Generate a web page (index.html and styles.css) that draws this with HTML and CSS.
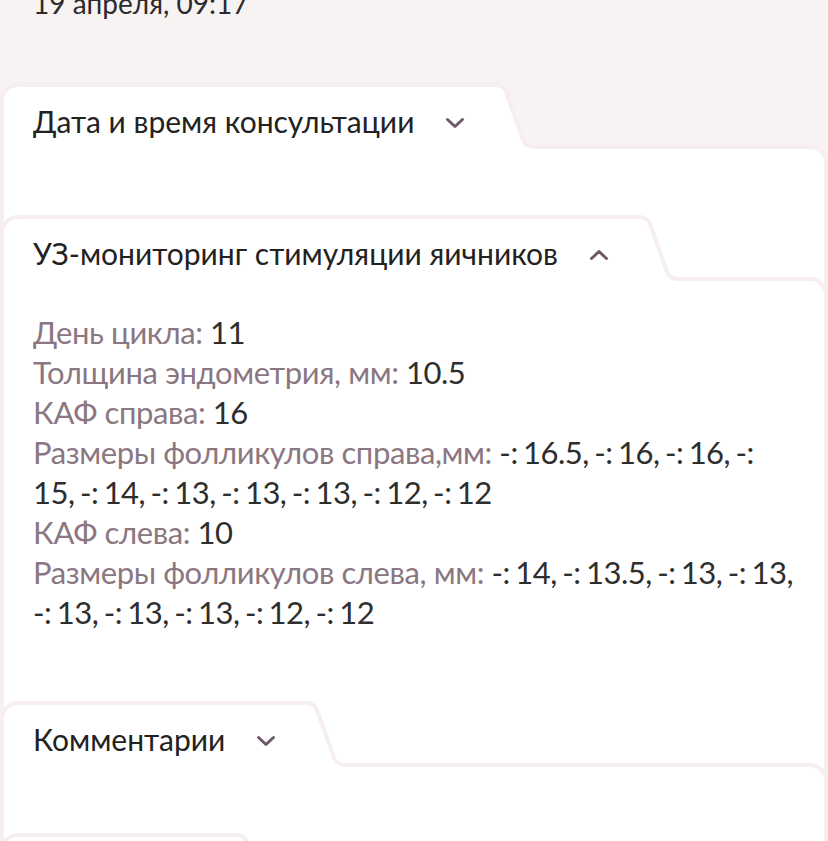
FILE: index.html
```html
<!DOCTYPE html>
<html lang="ru">
<head>
  <meta charset="UTF-8">
  <meta name="viewport" content="width=device-width, initial-scale=1.0">
  <title>Приём</title>
  <link rel="stylesheet" href="styles.css">
</head>
<body>
  <main class="visit">
    <p class="visit-date">19 апреля, 09:17</p>

    <section class="panel">
      <header class="panel-head">
        <div class="panel-tab">
          <h2 class="panel-title">Дата и время консультации</h2>
          <svg class="chevron" viewBox="0 0 20 12"><polyline points="2.5,2.5 10,9.5 17.5,2.5"/></svg>
        </div>
        <svg class="panel-slope" viewBox="0 0 48 66"><path class="slope-fill" d="M0 2 H3 C9 2 12 4 14 9 L31 57 C33 62 37 64 43 64 H48 V66 H0 Z"/><path class="slope-line" d="M0 2 H3 C9 2 12 4 14 9 L31 57 C33 62 37 64 43 64 H48"/></svg>
      </header>
      <div class="panel-body panel-body--empty"></div>
    </section>

    <section class="panel panel--stacked">
      <header class="panel-head">
        <div class="panel-tab">
          <h2 class="panel-title">УЗ-мониторинг стимуляции яичников</h2>
          <svg class="chevron" viewBox="0 0 20 12"><polyline points="2.5,9.5 10,2.5 17.5,9.5"/></svg>
        </div>
        <svg class="panel-slope" viewBox="0 0 48 66"><path class="slope-fill" d="M0 2 H3 C9 2 12 4 14 9 L31 57 C33 62 37 64 43 64 H48 V66 H0 Z"/><path class="slope-line" d="M0 2 H3 C9 2 12 4 14 9 L31 57 C33 62 37 64 43 64 H48"/></svg>
      </header>
      <div class="panel-body">
        <ul class="facts">
          <li><span class="fact-label">День цикла: </span>11</li>
          <li><span class="fact-label">Толщина эндометрия, мм: </span>10.5</li>
          <li><span class="fact-label">КАФ справа: </span>16</li>
          <li><span class="fact-label">Размеры фолликулов справа,мм: </span>-: 16.5, -: 16, -: 16, -: 15, -: 14, -: 13, -: 13, -: 13, -: 12, -: 12</li>
          <li><span class="fact-label">КАФ слева: </span>10</li>
          <li><span class="fact-label">Размеры фолликулов слева, мм: </span>-: 14, -: 13.5, -: 13, -: 13, -: 13, -: 13, -: 13, -: 12, -: 12</li>
        </ul>
      </div>
    </section>

    <section class="panel panel--stacked">
      <header class="panel-head">
        <div class="panel-tab">
          <h2 class="panel-title">Комментарии</h2>
          <svg class="chevron" viewBox="0 0 20 12"><polyline points="2.5,2.5 10,9.5 17.5,2.5"/></svg>
        </div>
        <svg class="panel-slope" viewBox="0 0 48 66"><path class="slope-fill" d="M0 2 H3 C9 2 12 4 14 9 L31 57 C33 62 37 64 43 64 H48 V66 H0 Z"/><path class="slope-line" d="M0 2 H3 C9 2 12 4 14 9 L31 57 C33 62 37 64 43 64 H48"/></svg>
      </header>
      <div class="panel-body panel-body--empty"></div>
    </section>

    <section class="panel panel--stacked">
      <header class="panel-head">
        <div class="panel-tab">
          <h2 class="panel-title">Анализы</h2>
          <svg class="chevron" viewBox="0 0 20 12"><polyline points="2.5,2.5 10,9.5 17.5,2.5"/></svg>
        </div>
        <svg class="panel-slope" viewBox="0 0 48 66"><path class="slope-fill" d="M0 2 H3 C9 2 12 4 14 9 L31 57 C33 62 37 64 43 64 H48 V66 H0 Z"/><path class="slope-line" d="M0 2 H3 C9 2 12 4 14 9 L31 57 C33 62 37 64 43 64 H48"/></svg>
      </header>
      <div class="panel-body panel-body--empty"></div>
    </section>
  </main>
</body>
</html>
```

FILE: styles.css
```css
body {
  margin: 0;
  padding: 0;
  font-family: Lato, "Noto Sans", sans-serif;
  background-color: #f8f3f3;
  color: #2b2b2b;
  overflow: hidden;
}

.visit-date {
  margin: -17px 0 0;
  padding-left: 33px;
  font-size: 28px;
  line-height: 40px;
}

/* Panels with a folder tab */
.panel {
  margin-top: 60px;
}

/* next panel slides over the lower part of the previous one */
.panel--stacked {
  margin-top: -90px;
}

.panel-head {
  position: relative;
  z-index: 1;
  display: flex;
  height: 66px;
  margin-bottom: -4px;
}

.panel-tab {
  display: flex;
  align-items: flex-start;
  background-color: #ffffff;
  border-top: 4px solid #f6eef0;
  border-left: 4px solid #f6eef0;
  border-top-left-radius: 18px;
  padding: 14px 0 0 29px;
}

.panel-title {
  margin: 0;
  font-size: 30px;
  font-weight: 400;
  line-height: 40px;
  color: #222222;
  white-space: nowrap;
}

.chevron {
  width: 20px;
  height: 12px;
  margin: 16px 27px 0 31px;
  flex: none;
}

.chevron polyline {
  fill: none;
  stroke: #6e5a66;
  stroke-width: 3;
  stroke-linecap: round;
  stroke-linejoin: round;
}

.panel-slope {
  width: 48px;
  height: 66px;
  flex: none;
}

.slope-fill {
  fill: #ffffff;
}

.slope-line {
  fill: none;
  stroke: #f6eef0;
  stroke-width: 4;
}

.panel-body {
  background-color: #ffffff;
  border: 4px solid #f6eef0;
  border-bottom: none;
  border-top-right-radius: 18px;
  padding: 31px 26px 159px 29px;
}

.panel-body--empty {
  padding: 0;
  height: 156px;
}

.facts {
  margin: 0;
  padding: 0;
  list-style: none;
  font-size: 31px;
  line-height: 40px;
  letter-spacing: -0.5px;
  word-spacing: -2px;
  color: #2e2e2e;
}

.fact-label {
  color: #8b7781;
  letter-spacing: -0.4px;
  word-spacing: 0;
}
```
